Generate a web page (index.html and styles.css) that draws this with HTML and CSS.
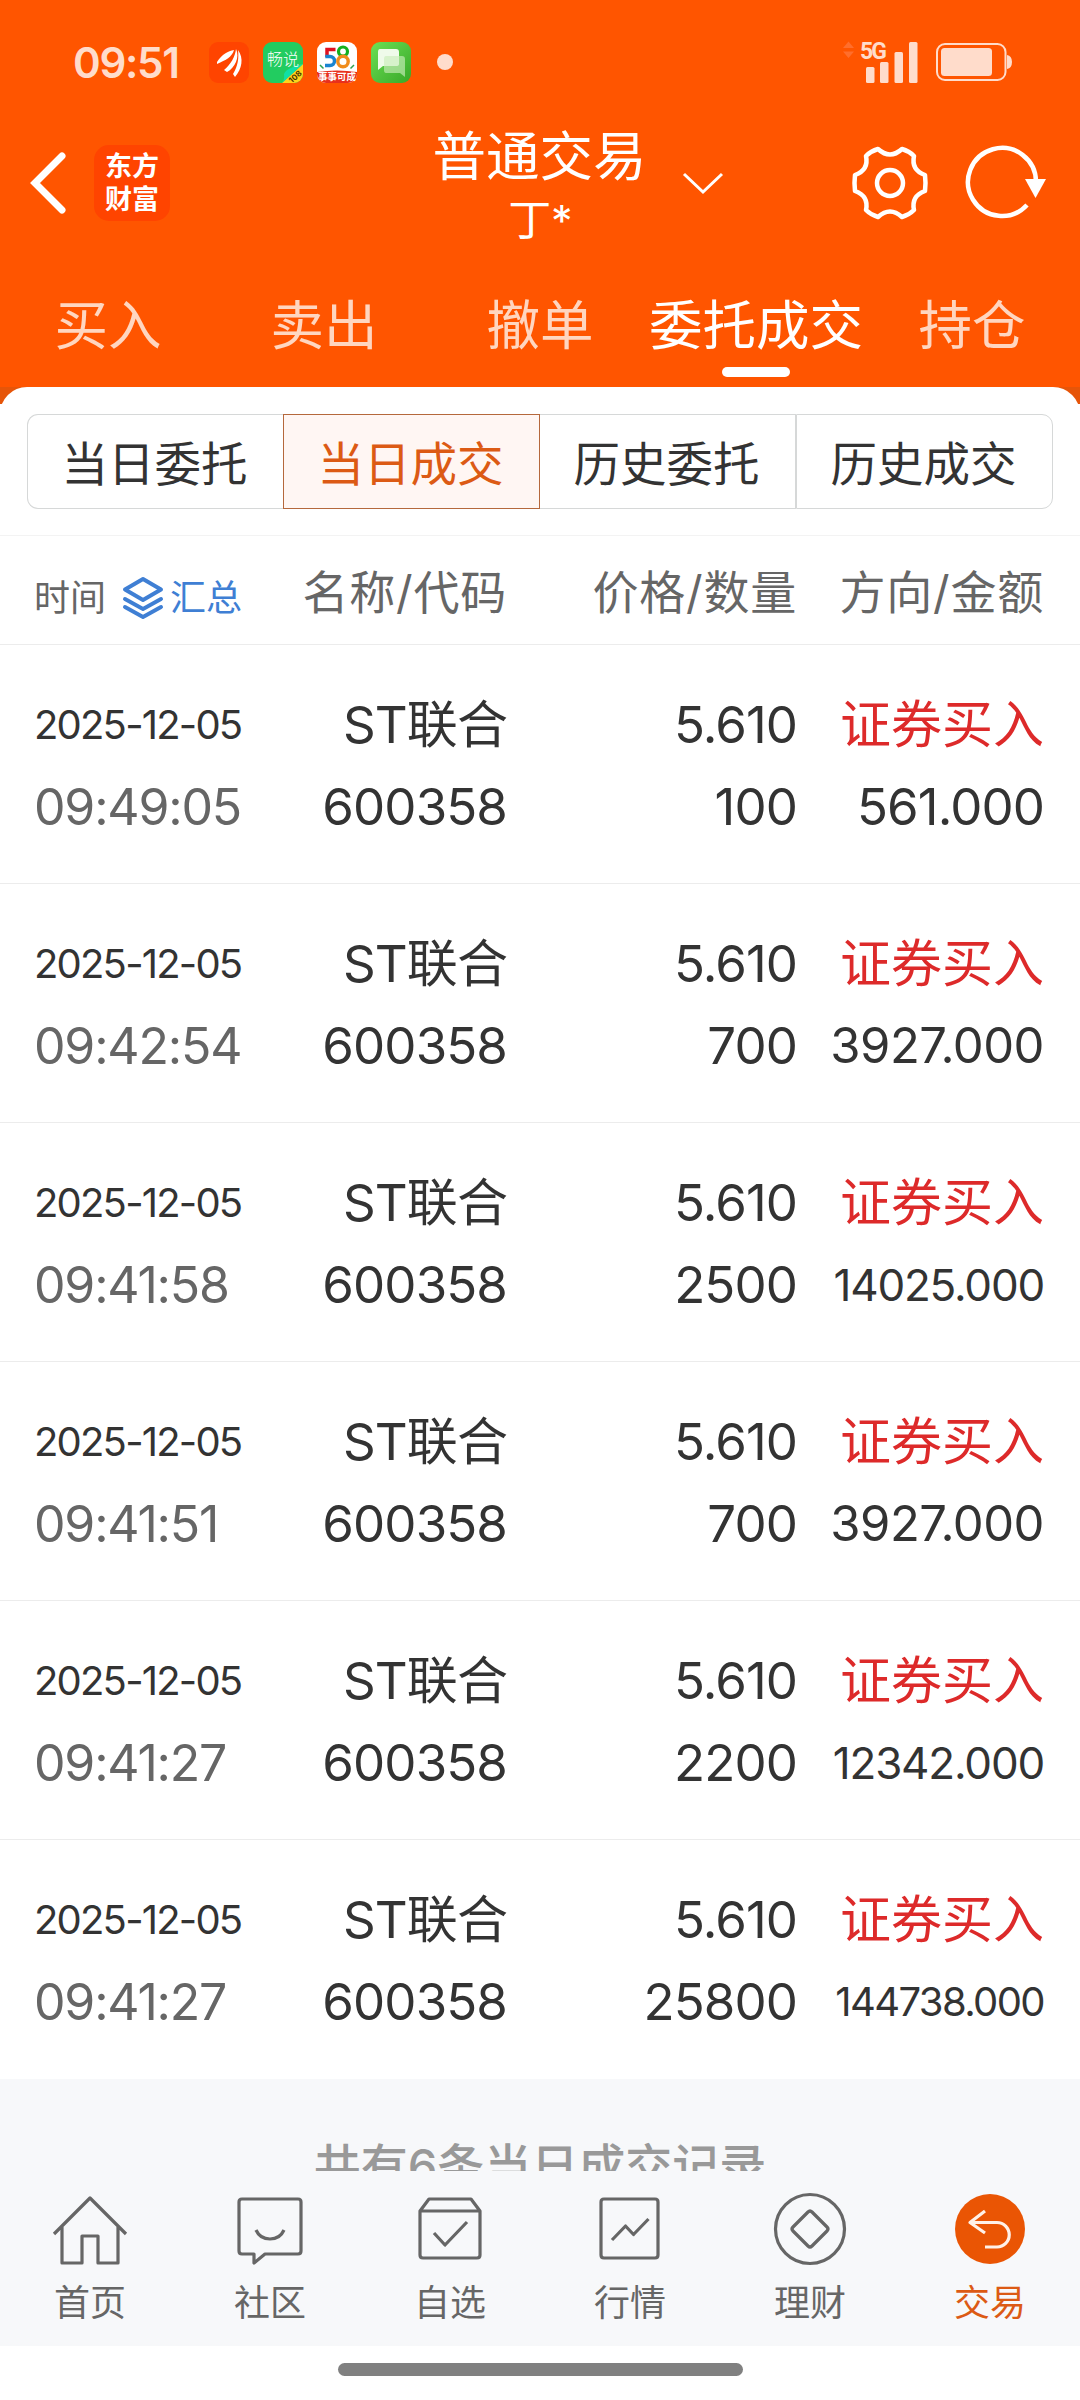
FILE: index.html
```html
<!DOCTYPE html>
<html lang="zh-CN">
<head>
    <meta charset="UTF-8">
    <meta name="viewport" content="width=device-width, initial-scale=1.0">
    <title>普通交易</title>
    <link rel="stylesheet" href="styles.css">
</head>
<body>

<div class="header">
    <div class="status-bar">
        <span class="clock">09:51</span>
        <div class="notices">
            <svg class="notice" viewBox="0 0 40 41">
                <rect width="40" height="41" rx="9" fill="#ff4400"/>
                <path d="M8 20 C13 12 19 9 25 8 C23 15 17 18 8 22Z" fill="#fff"/>
                <path d="M15 28 C22 22 26 15 27 7 C31 15 26 26 18 30Z" fill="#fff"/>
                <path d="M24 32 C29 24 30 16 29 8 C35 16 33 27 26 35Z" fill="#fff"/>
            </svg>
            <svg class="notice" viewBox="0 0 40 41">
                <defs><clipPath id="round"><rect width="40" height="41" rx="9"/></clipPath></defs>
                <g clip-path="url(#round)">
                    <rect width="40" height="41" fill="#22cc60"/>
                    <path d="M19 41 L40 22 V41Z" fill="#ffd21c"/>
                    <path d="M19 41 C22 37 21 34 21 32 C23 27 31 24 40 22Z" fill="#10dfa6"/>
                </g>
                <text x="20" y="23" class="cs-name">畅说</text>
                <text x="33" y="38" class="cs-num" transform="rotate(-42 32 36)">108</text>
            </svg>
            <svg class="notice" viewBox="0 0 40 41">
                <g clip-path="url(#round)">
                    <rect width="40" height="41" fill="#fff"/>
                    <path d="M0 30 Q20 27 40 30 V41 H0Z" fill="#e8301c"/>
                </g>
                <path d="M18.500 7.500 H10 V15" fill="none" stroke="#e01020" stroke-width="3.500"/>
                <path d="M8.300 14.500 H13 A4.500 4.500 0 0 1 13 23.500 H8" fill="none" stroke="#1a84d0" stroke-width="3.500"/>
                <circle cx="26" cy="9.500" r="4.500" fill="none" stroke="#14b020" stroke-width="3.200"/>
                <circle cx="26" cy="19.500" r="5.200" fill="none" stroke="#f08c1c" stroke-width="3.400"/>
                <path d="M3 23 L6.500 26.500 M37 23 L33.500 26.500" stroke="#30a050" stroke-width="1.500"/>
                <text x="20" y="38" class="wb-name">事事可成</text>
            </svg>
            <svg class="notice" viewBox="0 0 40 41">
                <defs>
                    <linearGradient id="msg" x1="0" y1="0" x2="1" y2="1">
                        <stop offset="0" stop-color="#6cdf54"/>
                        <stop offset="1" stop-color="#38a828"/>
                    </linearGradient>
                </defs>
                <rect width="40" height="41" rx="9" fill="url(#msg)"/>
                <path d="M9 7 H25 Q28 7 28 10 V22 Q28 24 25 24 H12 L7 28 V10 Q7 7 9 7Z" fill="#effbea"/>
                <path d="M15 14 H31 Q34 14 34 17 V35 L29 31 H15 Q13 31 13 28 V17 Q13 14 15 14Z" fill="#c9edba" opacity=".65"/>
            </svg>
            <span class="dot"></span>
        </div>
        <svg class="signal" viewBox="0 0 76 42">
            <path d="M0 7 L5.500 0.500 L11 7Z M0 10.500 L5.500 17 L11 10.500Z" fill="#ff6e2c"/>
            <text x="17" y="17.500" class="net">5G</text>
            <g fill="#ffdccb">
                <rect x="23" y="26" width="8.500" height="16" rx="1.500"/>
                <rect x="37" y="21" width="8.500" height="21" rx="1.500"/>
                <rect x="51.500" y="11" width="8.500" height="31" rx="1.500"/>
                <rect x="66" y="1" width="8.500" height="41" rx="1.500"/>
            </g>
        </svg>
        <svg class="battery" viewBox="0 0 76 38">
            <rect x="1" y="1" width="68.500" height="36" rx="8" fill="none" stroke="#ffdccb" stroke-width="2"/>
            <rect x="5" y="5" width="51" height="28" rx="3.500" fill="#ffdccb"/>
            <path d="M71 12 Q76 13 76 19 Q76 25 71 26Z" fill="#ffdccb"/>
        </svg>
    </div>

    <div class="title-bar">
        <svg class="back" viewBox="0 0 36 62"><path d="M32 4 L5 31 L32 58" fill="none" stroke="#fff" stroke-width="7" stroke-linecap="round"/></svg>
        <div class="brand"><span>东方</span><span>财富</span></div>
        <div class="title">
            <div class="title-main">普通交易</div>
            <div class="title-sub">丁*</div>
        </div>
        <svg class="arrow-down" viewBox="0 0 42 22"><path d="M2 2 L21 20 L40 2" fill="none" stroke="#fff" stroke-width="3"/></svg>
        <svg class="gear" viewBox="-38 -38 76 76" fill="none" stroke="#fff" stroke-width="4.500" stroke-linejoin="round">
            <path d="M-12 -34 Q0 -23 12 -34 Q19 -32 24 -27 Q21 -13 35 -8 Q36 0 35 8 Q21 13 24 27 Q19 32 12 34 Q0 23 -12 34 Q-19 32 -24 27 Q-21 13 -35 8 Q-36 0 -35 -8 Q-21 -13 -24 -27 Q-19 -32 -12 -34Z"/>
            <circle r="13"/>
        </svg>
        <svg class="refresh" viewBox="0 0 82 74">
            <path d="M61 59 A34 34 0 1 1 70 36" fill="none" stroke="#fff" stroke-width="4.500"/>
            <path d="M59 33 H80 L69.500 52Z" fill="#fff"/>
        </svg>
    </div>

    <div class="tabs">
        <a>买入</a>
        <a>卖出</a>
        <a>撤单</a>
        <a class="active">委托成交</a>
        <a>持仓</a>
    </div>
</div>

<div class="panel-wrap">
    <div class="panel">
        <div class="segment">
            <button>当日委托</button>
            <button class="active">当日成交</button>
            <button>历史委托</button>
            <button>历史成交</button>
        </div>
    </div>
</div>

<div class="grid-row list-head">
    <div class="time-head">
        <span>时间</span>
        <svg class="layers" viewBox="0 0 40 42" fill="none" stroke="#3f7fd4" stroke-width="4" stroke-linejoin="round" stroke-linecap="round">
            <path d="M20 2 L38 12.500 L20 23 L2 12.500Z"/>
            <path d="M2 22 L20 32 L38 22"/>
            <path d="M2 30 L20 40 L38 30"/>
        </svg>
        <span class="summary">汇总</span>
    </div>
    <div class="right">名称/代码</div>
    <div class="right">价格/数量</div>
    <div class="right">方向/金额</div>
</div>

<div class="list">
    <div class="grid-row deal">
        <div class="date">2025-12-05</div><div class="right">ST联合</div><div class="right">5.610</div><div class="right buy">证券买入</div>
        <div class="time">09:49:05</div><div class="right">600358</div><div class="right">100</div><div class="right">561.000</div>
    </div>
    <div class="grid-row deal">
        <div class="date">2025-12-05</div><div class="right">ST联合</div><div class="right">5.610</div><div class="right buy">证券买入</div>
        <div class="time">09:42:54</div><div class="right">600358</div><div class="right">700</div><div class="right len8">3927.000</div>
    </div>
    <div class="grid-row deal">
        <div class="date">2025-12-05</div><div class="right">ST联合</div><div class="right">5.610</div><div class="right buy">证券买入</div>
        <div class="time">09:41:58</div><div class="right">600358</div><div class="right">2500</div><div class="right len9">14025.000</div>
    </div>
    <div class="grid-row deal">
        <div class="date">2025-12-05</div><div class="right">ST联合</div><div class="right">5.610</div><div class="right buy">证券买入</div>
        <div class="time">09:41:51</div><div class="right">600358</div><div class="right">700</div><div class="right len8">3927.000</div>
    </div>
    <div class="grid-row deal">
        <div class="date">2025-12-05</div><div class="right">ST联合</div><div class="right">5.610</div><div class="right buy">证券买入</div>
        <div class="time">09:41:27</div><div class="right">600358</div><div class="right">2200</div><div class="right len9">12342.000</div>
    </div>
    <div class="grid-row deal">
        <div class="date">2025-12-05</div><div class="right">ST联合</div><div class="right">5.610</div><div class="right buy">证券买入</div>
        <div class="time">09:41:27</div><div class="right">600358</div><div class="right">25800</div><div class="right len10">144738.000</div>
    </div>
</div>

<div class="list-foot">共有6条当日成交记录</div>

<div class="nav">
    <a>
        <svg viewBox="0 0 76 76"><path d="M2 41 L38 5 L74 41 M10 33 V70 H30 V43 H46 V70 H66 V33"/></svg>
        <span>首页</span>
    </a>
    <a>
        <svg viewBox="0 0 76 76"><path d="M10 6 H66 Q69 6 69 9 V58 Q69 61 66 61 H33 L22 70 V61 H10 Q7 61 7 58 V9 Q7 6 10 6Z M24 37 Q28 46 38 46 Q48 46 52 37"/></svg>
        <span>社区</span>
    </a>
    <a>
        <svg viewBox="0 0 76 76"><path d="M8 18 L17 6 H59 L68 18 V62 Q68 65 65 65 H11 Q8 65 8 62Z M8 18 H68 M22 40 L33 52 L55 29"/></svg>
        <span>自选</span>
    </a>
    <a>
        <svg viewBox="0 0 76 76"><path d="M12 6 H63 Q66 6 66 9 V62 Q66 65 63 65 H12 Q9 65 9 62 V9 Q9 6 12 6Z M20 47 L33.500 33 L41.500 41.500 L56.500 26"/></svg>
        <span>行情</span>
    </a>
    <a>
        <svg viewBox="0 0 76 76"><circle cx="38" cy="36" r="34.500"/><path d="M36 19 Q38 17 40 19 L55 34 Q57 36 55 38 L40 53 Q38 55 36 53 L21 38 Q19 36 21 34Z"/></svg>
        <span>理财</span>
    </a>
    <a class="active">
        <svg viewBox="0 0 76 76"><circle class="fill" cx="38" cy="36" r="35"/><path d="M33 18 L18 29.500 L33 40 M19 29.500 H45 A12 12 0 0 1 45 54 H33"/></svg>
        <span>交易</span>
    </a>
</div>

<div class="home-bar"><span></span></div>

</body>
</html>
```

FILE: styles.css
```css
* {
    box-sizing: border-box;
}
body {
    margin: 0;
    width: 1080px;
    height: 2400px;
    overflow: hidden;
    background: #fff;
    color: #333;
    font-family: Inter, "Noto Sans CJK SC", sans-serif;
    font-size: 51px;
    display: flex;
    flex-direction: column;
}
svg {
    display: block;
    flex: none;
    overflow: visible;
}

/* header */
.header {
    background: #ff5500;
    height: 387px;
    color: #fff;
}
.status-bar {
    height: 124px;
    padding: 0 68px 0 73px;
    display: flex;
    align-items: center;
}
.clock {
    width: 136px;
    font-size: 42px;
    font-weight: 600;
    letter-spacing: -1.300px;
    color: #ffdccb;
}
.notices {
    display: flex;
    align-items: center;
    gap: 14px;
}
.notice {
    width: 40px;
    height: 41px;
}
.dot {
    width: 16px;
    height: 16px;
    margin-left: 12px;
    border-radius: 50%;
    background: #ffdccb;
}
.cs-name {
    font-size: 16px;
    font-weight: 300;
    fill: #fff;
    text-anchor: middle;
}
.cs-num {
    font-size: 8px;
    font-weight: 700;
    fill: #443300;
    text-anchor: middle;
}
.wb-name {
    font-size: 9.500px;
    font-weight: 700;
    fill: #fff;
    text-anchor: middle;
}
.signal {
    width: 76px;
    height: 42px;
    margin-left: auto;
}
.net {
    font-family: Roboto, sans-serif;
    font-size: 23px;
    font-weight: 700;
    fill: #ffdccb;
    letter-spacing: -2px;
}
.battery {
    width: 76px;
    height: 38px;
    margin-left: 17px;
}
.title-bar {
    height: 136px;
    padding: 0 32px 18px 30px;
    display: flex;
    align-items: center;
}
.back {
    width: 36px;
    height: 62px;
}
.brand {
    width: 76px;
    height: 76px;
    margin-left: 28px;
    border-radius: 15px;
    background: #ff4400;
    display: flex;
    flex-direction: column;
    align-items: center;
    justify-content: center;
    font-size: 27px;
    font-weight: 700;
    line-height: 33px;
}
.title {
    width: 300px;
    margin-left: 220px;
    padding-top: 7px;
    text-align: center;
}
.title-main {
    font-size: 53.500px;
    line-height: 66px;
}
.title-sub {
    font-size: 43px;
    line-height: 60px;
    padding-left: 2px;
}
.arrow-down {
    width: 42px;
    height: 22px;
    margin-left: -7px;
}
.gear {
    width: 76px;
    height: 76px;
    margin-left: 128px;
}
.refresh {
    width: 82px;
    height: 74px;
    margin-left: 38px;
}
.tabs {
    height: 127px;
    display: grid;
    grid-template-columns: repeat(5, 216px);
    font-size: 53.500px;
    line-height: 132px;
    text-align: center;
}
.tabs a {
    height: 127px;
    color: #ffd6c0;
    white-space: nowrap;
}
.tabs .active {
    position: relative;
    color: #fff;
}
.tabs .active::after {
    content: "";
    position: absolute;
    left: 74px;
    bottom: 10px;
    width: 68px;
    height: 10px;
    border-radius: 5px;
    background: #fff;
}

/* segment switch */
.panel-wrap {
    background: linear-gradient(#e65509 17px, #fff 17px);
}
.panel {
    height: 149px;
    padding: 27px;
    border-radius: 27px 27px 0 0;
    background: #fff;
    border-bottom: 1px solid #f3f3f3;
}
.segment {
    height: 95px;
    display: flex;
}
.segment button {
    flex: 1;
    padding: 0 2px 3px 0;
    border: 1px solid #d6d8d8;
    border-left-width: 0;
    background: #fff;
    color: #333;
    font: inherit;
    font-size: 46.500px;
}
.segment button:first-child {
    border-left-width: 1px;
    border-right-width: 0;
    border-radius: 11px 0 0 11px;
}
.segment button:last-child {
    border-left-width: 1px;
    border-radius: 0 11px 11px 0;
}
.segment .active {
    border: 1px solid #b5683c;
    background: #fff6f3;
    color: #dc5a14;
}

/* deal list */
.grid-row {
    display: grid;
    grid-template-columns: 232px 241px 290px 247px;
    padding-left: 34px;
    border-bottom: 1px solid #ececec;
    white-space: nowrap;
}
.right {
    text-align: right;
    letter-spacing: -0.900px;
}
.list-head {
    height: 109px;
    align-items: center;
    color: #666;
    font-size: 46px;
    line-height: 113px;
}
.list-head .right {
    letter-spacing: 0.800px;
}
.time-head {
    display: flex;
    align-items: center;
    padding-top: 11px;
    font-size: 36px;
    line-height: 100px;
}
.layers {
    width: 40px;
    height: 42px;
    margin: 0 7px 0 17px;
}
.summary {
    color: #3f7fd4;
}
.deal {
    height: 239px;
    padding-top: 39px;
    grid-auto-rows: 82px;
    line-height: 82px;
}
.deal:last-child {
    border-bottom: none;
}
.date {
    font-size: 40px;
    letter-spacing: -1.800px;
}
.time {
    font-size: 50px;
    letter-spacing: -1.200px;
    color: #666;
}
.deal .buy {
    color: #dd2a2a;
    letter-spacing: 0;
}
.len8 {
    font-size: 49px;
    letter-spacing: -0.500px;
}
.len9 {
    font-size: 44px;
    letter-spacing: -1.200px;
}
.len10 {
    font-size: 40px;
    letter-spacing: -1.600px;
}
.list-foot {
    height: 92px;
    padding-top: 46px;
    overflow: hidden;
    background: #f7f8fa;
    color: #999;
    text-align: center;
    font-size: 47px;
    font-weight: 500;
    line-height: 82px;
}

/* bottom nav */
.nav {
    height: 176px;
    padding-top: 22px;
    display: flex;
    background: #f7f8fa;
}
.nav a {
    flex: 1;
    display: flex;
    flex-direction: column;
    align-items: center;
    font-size: 36px;
    line-height: 68px;
    color: #666;
}
.nav svg {
    width: 76px;
    height: 76px;
    fill: none;
    stroke: #666;
    stroke-width: 3.200;
    stroke-linejoin: round;
}
.nav .active {
    color: #dc5a14;
}
.nav .active svg {
    stroke: #fff1e8;
}
.nav .fill {
    fill: #ea5504;
    stroke: none;
}
.home-bar {
    height: 54px;
    padding-top: 17px;
}
.home-bar span {
    display: block;
    width: 405px;
    height: 13px;
    margin: 0 auto;
    border-radius: 7px;
    background: #808080;
}
```
